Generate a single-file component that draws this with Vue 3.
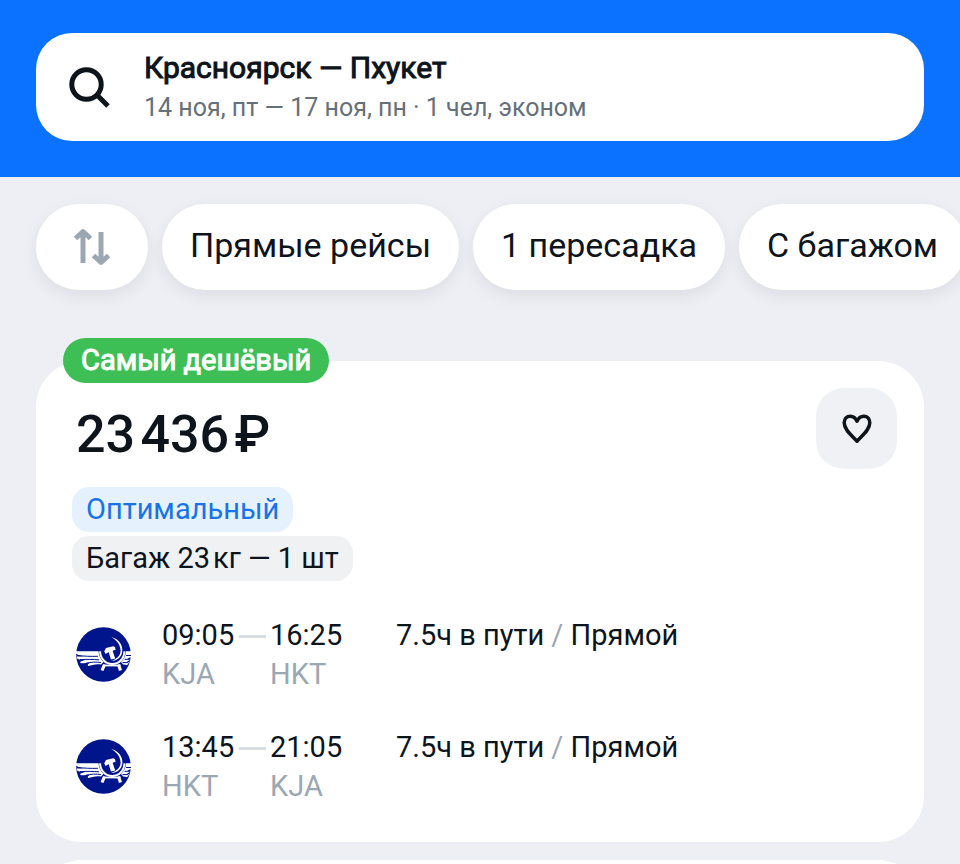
<script setup>
const filters = ['Прямые рейсы', '1 пересадка', 'С багажом']

const legs = [
  { depart: '09:05', from: 'KJA', arrive: '16:25', to: 'HKT', duration: '7.5ч в пути', stops: 'Прямой' },
  { depart: '13:45', from: 'HKT', arrive: '21:05', to: 'KJA', duration: '7.5ч в пути', stops: 'Прямой' },
]
</script>

<template>
  <div class="page">
    <header class="header">
      <button class="search" type="button">
        <svg class="search-icon" viewBox="0 0 44 44" aria-hidden="true">
          <circle cx="18.5" cy="18.5" r="14.7" />
          <path d="M29 29 40 40" />
        </svg>
        <span class="search-text">
          <span class="route">Красноярск — Пхукет</span>
          <span class="details">14 ноя, пт — 17 ноя, пн · 1 чел, эконом</span>
        </span>
      </button>
    </header>

    <nav class="filters">
      <button class="chip chip-sort" type="button" aria-label="Сортировка">
        <svg class="sort-icon" viewBox="0 0 40 40" aria-hidden="true">
          <path d="M11 36V4M3.5 11.5 11 4.5 18.5 11.5" />
          <path d="M29 5V36M21.5 28.5 29 35.5 36.5 28.5" />
        </svg>
      </button>
      <button v-for="name in filters" :key="name" class="chip" type="button">{{ name }}</button>
    </nav>

    <main class="results">
      <article class="ticket">
        <span class="badge">Самый дешёвый</span>
        <div class="ticket-top">
          <div class="price">23&#8202;436&#8202;₽</div>
          <button class="favorite" type="button" aria-label="В избранное">
            <svg class="heart-icon" viewBox="0 0 32 32" aria-hidden="true">
              <path d="M16 28.2C11 22.8 3.2 17 3.2 9.8C3.2 5.8 5.8 3.2 9.2 3.2C12.4 3.2 14.8 5.4 16 8.2C17.2 5.4 19.6 3.2 22.8 3.2C26.2 3.2 28.8 5.8 28.8 9.8C28.8 17 21 22.8 16 28.2Z" />
            </svg>
          </button>
        </div>
        <div class="tags">
          <span class="tag tag-accent">Оптимальный</span>
          <span class="tag">Багаж 23&#8202;кг — 1 шт</span>
        </div>
        <div class="legs">
          <section v-for="leg in legs" :key="leg.depart" class="leg">
            <svg class="airline" viewBox="0 0 56 56" aria-hidden="true">
              <circle cx="27.5" cy="27.5" r="27.3" fill="#00148c" />
              <path d="M0 24.2H22.5C23 29 24.5 32 27.5 35L25 37.5C20 36.5 16 38 12.5 39C11 38.5 11.5 37 14 36C10 36 7 36.5 4.5 36C3.5 34.5 6 33.8 9 33.3C6 33 3 32.5 1 31.5V29.5H8C4 29 1.5 28 0 26.5Z" fill="#fff" />
              <path d="M1 28.3C8 29.3 15 29.5 22 29.3M4 32.6C11 32.3 17 32.3 23 32.8M10 36.2C15 35 20 34.8 25 35.5" fill="none" stroke="#00148c" stroke-width="1" />
              <path d="M55 24.2H50C49.5 29 48 32 45 35L47 37.5C48.5 37.3 50 37.8 51 38.2L53 35.5 51 34.5 54 33 51.5 31.5 55 30Z" fill="#fff" />
              <path d="M50 28.5H55M48.5 32.3H53.5M46.5 35.6H52" fill="none" stroke="#00148c" stroke-width="1" />
              <circle cx="36.2" cy="24.5" r="12.2" fill="#00148c" />
              <g fill="none" stroke="#fff">
                <path d="M24 24.2C24.5 32 29.5 37 36.2 37C43 37 48 32 48.5 24.2" stroke-width="2" />
                <path d="M27.5 38.5H44.5" stroke-width="1.8" />
                <path d="M28.5 37.5 26 43.5M42.5 37.5 44.5 43.5" stroke-width="3.2" />
              </g>
              <path d="M35 9.8C43.5 12.5 47.2 18.5 46.2 25C45.2 30.5 41 33.8 35.5 34C40.5 32 44.8 28.5 44.6 23.5C44.4 17.5 40.5 13 35 9.8Z" fill="#fff" />
              <path d="M28.2 24.5 30 21 37.2 19.2 39 20 39.6 22.8 36.6 23.8 39.2 31.5 35 32.5 32.6 25 29.8 27Z" fill="#fff" />
            </svg>
            <div class="point">
              <time>{{ leg.depart }}</time>
              <span class="code">{{ leg.from }}</span>
            </div>
            <span class="dash"></span>
            <div class="point">
              <time>{{ leg.arrive }}</time>
              <span class="code">{{ leg.to }}</span>
            </div>
            <div class="summary">{{ leg.duration }} <span class="slash">/</span> {{ leg.stops }}</div>
          </section>
        </div>
      </article>
      <article class="ticket ticket-next"></article>
    </main>
  </div>
</template>

<style>
body {
  margin: 0;
  background: #eeeff4;
}
</style>

<style scoped>
.page {
  height: 100vh;
  overflow: hidden;
  background: #eeeff4;
  color: #0e141b;
  font-family: Roboto, "Noto Sans", sans-serif;
  font-size: 29px;
  line-height: 39px;
}

button {
  border: 0;
  margin: 0;
  font: inherit;
  color: inherit;
  cursor: pointer;
}

svg {
  display: block;
  flex: none;
}

.header {
  padding: 33px 36px 36px;
  background: #0b72ff;
}

.search {
  display: flex;
  align-items: center;
  gap: 32px;
  width: 100%;
  padding: 17px 32px 15px;
  border-radius: 36px;
  background: #fff;
  text-align: left;
}

.search-icon {
  width: 44px;
  height: 44px;
  fill: none;
  stroke: #0e141b;
  stroke-width: 5;
}

.search-text {
  display: flex;
  flex-direction: column;
  gap: 4px;
  line-height: 36px;
}

.route {
  font-size: 30px;
  -webkit-text-stroke: 1px currentColor;
}

.details {
  color: #66707a;
  font-size: 25px;
}

.filters {
  display: flex;
  gap: 14px;
  padding: 27px 36px 71px;
  overflow: hidden;
}

.chip {
  flex: none;
  height: 86px;
  padding: 0 28px 5px;
  border-radius: 43px;
  background: #fff;
  box-shadow: 0 6px 16px rgba(30, 40, 60, 0.08);
  font-size: 34px;
  line-height: 40px;
  white-space: nowrap;
}

.chip-sort {
  padding: 0 36px;
}

.sort-icon {
  width: 40px;
  height: 40px;
  fill: none;
  stroke: #9ba7b3;
  stroke-width: 5;
  stroke-linejoin: round;
}

.results {
  display: flex;
  flex-direction: column;
  gap: 18px;
  padding: 0 36px;
}

.ticket {
  position: relative;
  padding: 27px 27px 36px 36px;
  border-radius: 46px;
  background: #fff;
}

.ticket-next {
  min-height: 400px;
}

.badge {
  position: absolute;
  top: -23px;
  left: 27px;
  padding: 0 18px;
  border-radius: 23px;
  background: #3dbf56;
  color: #fff;
  line-height: 45px;
  -webkit-text-stroke: 1px currentColor;
}

.ticket-top {
  display: flex;
  justify-content: space-between;
  gap: 24px;
}

.price {
  padding: 15px 4px 20px;
  font-size: 52px;
  font-weight: 500;
  line-height: 64px;
}

.favorite {
  display: grid;
  place-items: center;
  width: 81px;
  height: 81px;
  padding: 0;
  border-radius: 28px;
  background: #f0f1f4;
}

.heart-icon {
  width: 32px;
  height: 32px;
  fill: none;
  stroke: #0e141b;
  stroke-width: 3.5;
  stroke-linejoin: round;
}

.tags {
  display: flex;
  flex-direction: column;
  align-items: flex-start;
  gap: 4px;
}

.tag {
  padding: 0 14px;
  border-radius: 17px;
  background: #f0f1f3;
  line-height: 45px;
}

.tag-accent {
  background: #e5f1fd;
  color: #1773e6;
}

.legs {
  display: flex;
  flex-direction: column;
  gap: 34px;
  padding: 35px 0 0 4px;
}

.leg {
  display: flex;
}

.airline {
  align-self: center;
  width: 56px;
  height: 56px;
  margin-right: 30px;
}

.point {
  display: flex;
  flex-direction: column;
  min-width: 74px;
}

.code {
  color: #9ba7b3;
}

.dash {
  flex: none;
  width: 27px;
  height: 3px;
  margin: 19px 4px 0 3px;
  background: #dadde0;
}

.summary {
  padding-left: 52px;
}

.slash {
  color: #9ba7b3;
}
</style>
